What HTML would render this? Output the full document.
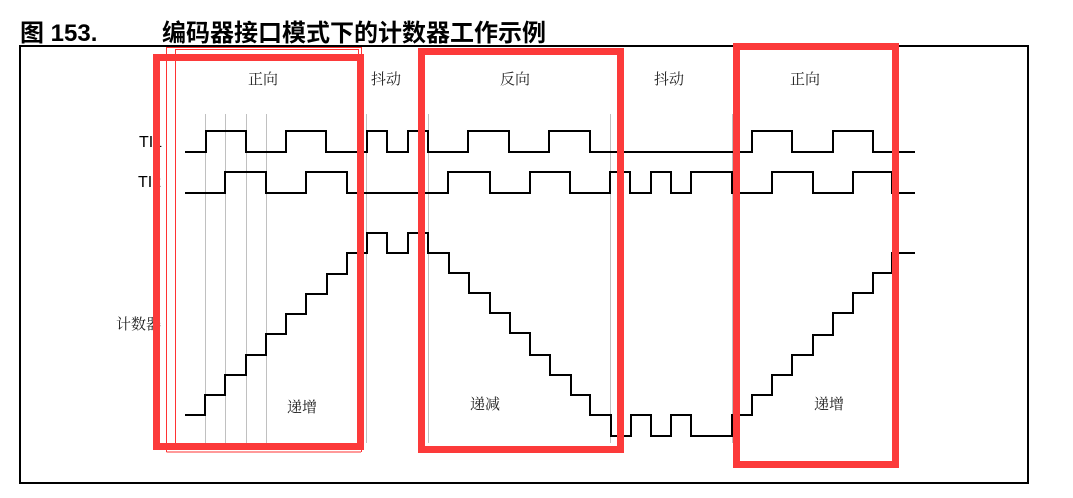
<!DOCTYPE html>
<html><head><meta charset="utf-8"><style>
html,body{margin:0;padding:0;background:#fff;width:1073px;height:498px;overflow:hidden}
svg{display:block}
.cj{font-family:"Noto Serif CJK SC","Liberation Serif",serif;font-size:15px;fill:#222}
.sg{font-family:"Liberation Sans",sans-serif;font-size:16px;fill:#000}
</style></head><body>
<svg width="1073" height="498" viewBox="0 0 1073 498" xmlns="http://www.w3.org/2000/svg">
<text x="20" y="41" font-family="Liberation Sans, 'Noto Sans CJK SC', sans-serif" font-weight="bold" font-size="24" fill="#000">图 153.</text>
<text x="162" y="41" font-family="Liberation Sans, 'Noto Sans CJK SC', sans-serif" font-weight="bold" font-size="24" fill="#000">编码器接口模式下的计数器工作示例</text>
<rect x="20" y="46" width="1008" height="437" fill="none" stroke="#000" stroke-width="2"/>
<g stroke="#c0c0c0" stroke-width="1">
<line x1="205.5" y1="114" x2="205.5" y2="443"/><line x1="225.5" y1="114" x2="225.5" y2="443"/>
<line x1="246.5" y1="114" x2="246.5" y2="443"/><line x1="266.5" y1="114" x2="266.5" y2="443"/>
<line x1="366.5" y1="114" x2="366.5" y2="443"/><line x1="428.5" y1="114" x2="428.5" y2="443"/>
<line x1="610.5" y1="114" x2="610.5" y2="443"/><line x1="732.5" y1="114" x2="732.5" y2="443"/>
</g>
<g fill="none" stroke="#f33" stroke-width="1">
<path d="M166.5 452V47.5H361.5V452"/><path d="M175.5 450V49.5H358.5V450"/>
<path d="M166.5 452H361"/>
</g>
<g class="cj">
<text x="248" y="84">正向</text><text x="371" y="84">抖动</text><text x="500" y="84">反向</text>
<text x="654" y="84">抖动</text><text x="790" y="84">正向</text>
<text x="116" y="329">计数器</text>
<text x="287" y="412">递增</text><text x="470" y="409">递减</text><text x="814" y="409">递增</text>
</g>
<text class="sg" x="139" y="147">TI1</text>
<text class="sg" x="138" y="187">TI2</text>
<g fill="none" stroke="#000" stroke-width="2">
<path d="M185 152H206V131H246V152H286V131H326V152H367V131H387V152H408V131H428V152H468V131H509V152H549V131H590V152H752V131H792V152H833V131H873V152H915"/>
<path d="M185 193H225V172H266V193H306V172H347V193H448V172H490V193H530V172H570V193H610V172H630V193H651V172H671V193H691V172H732V193H772V172H813V193H853V172H892V193H915"/>
<path d="M185 415H205V395H225V375H246V355H266V334H286V314H306V294H327V274H347V253H367V233H387V253H408V233H428V253H449V273H469V293H490V313H510V333H530V355H550V375H571V395H590V415H611V436H631V415H651V436H671V415H691V436H732V415H752V395H772V375H792V355H813V335H833V313H853V293H873V273H892V253H915"/>
</g>
<g fill="none" stroke="#fc3a3a" stroke-width="7">
<rect x="156.5" y="57.5" width="204" height="389"/>
<rect x="421.5" y="51.5" width="199" height="398"/>
<rect x="736.5" y="46.5" width="159" height="418"/>
</g>
</svg>
</body></html>
